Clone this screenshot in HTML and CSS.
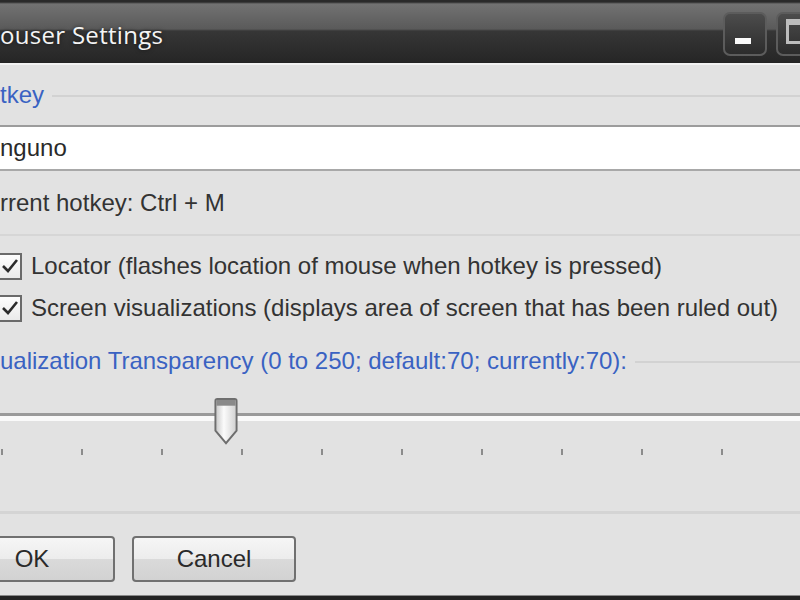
FILE: index.html
```html
<!DOCTYPE html>
<html lang="en">
<head>
    <meta charset="UTF-8">
    <title>Mouser Settings</title>
    <link rel="stylesheet" href="styles.css">
</head>
<body>
    <div class="window">
        <!-- title bar -->
        <header class="titlebar">
            <h1 class="title">ouser Settings</h1>
            <div class="controls">
                <span class="ctl ctl-min"><span class="glyph-min"></span></span>
                <span class="ctl ctl-max"><span class="glyph-max"></span></span>
            </div>
        </header>

        <main class="content">
            <!-- hotkey group -->
            <div class="group-head">
                <span class="group-label">tkey</span>
                <span class="group-line"></span>
            </div>
            <div class="textbox">nguno</div>
            <p class="current">rrent hotkey: Ctrl + M</p>
            <div class="sep sep-top"></div>

            <!-- options -->
            <label class="check">
                <span class="box"><svg viewBox="0 0 20 20" width="20" height="20"><path d="M3 10 L8 15 L17 4" fill="none" stroke="#2b2b2b" stroke-width="2.6"/></svg></span>
                Locator (flashes location of mouse when hotkey is pressed)
            </label>
            <label class="check">
                <span class="box"><svg viewBox="0 0 20 20" width="20" height="20"><path d="M3 10 L8 15 L17 4" fill="none" stroke="#2b2b2b" stroke-width="2.6"/></svg></span>
                Screen visualizations (displays area of screen that has been ruled out)
            </label>

            <!-- transparency -->
            <div class="group-head group-trans">
                <span class="group-label">ualization Transparency (0 to 250; default:70; currently:70):</span>
                <span class="group-line"></span>
            </div>
            <div class="slider">
                <div class="track"></div>
                <svg class="thumb" viewBox="0 0 26 50" width="26" height="50">
                    <defs>
                        <linearGradient id="thumbFill" x1="0" x2="1" y1="0" y2="0">
                            <stop offset="0" stop-color="#c8c8c8"/>
                            <stop offset="0.4" stop-color="#fbfbfb"/>
                            <stop offset="1" stop-color="#d0d0d0"/>
                        </linearGradient>
                    </defs>
                    <path d="M2 3 Q2 1 4 1 L22 1 Q24 1 24 3 L24 34 L13 47 L2 34 Z" fill="url(#thumbFill)" stroke="#6e6e6e" stroke-width="2"/>
                    <rect x="3" y="2" width="20" height="6" fill="#8a8a8a"/>
                </svg>
            </div>
            <div class="ticks">
                <i></i><i></i><i></i><i></i><i></i><i></i><i></i><i></i><i></i><i></i><i></i>
            </div>
            <div class="sep sep-bottom"></div>

            <div class="buttons">
                <button type="button" class="btn btn-ok">OK</button>
                <button type="button" class="btn btn-cancel">Cancel</button>
            </div>
        </main>
        <div class="frame-bottom"></div>
    </div>
</body>
</html>
```

FILE: styles.css
```css
body {
    margin: 0;
    padding: 0;
    background-color: #e2e2e2;
    font-family: 'Liberation Sans', Arial, sans-serif;
}
.window {
    width: 800px;
    height: 600px;
    overflow: hidden;
    display: flex;
    flex-direction: column;
    background-color: #e2e2e2;
}
.titlebar {
    height: 65px;
    flex: none;
    display: flex;
    align-items: center;
    justify-content: space-between;
    background: linear-gradient(#2a2a2a 0, #2a2a2a 2px, #727272 4px, #5a5a5a 29px, #363636 31px, #262626 62px, #1a1a1a 65px);
    border-bottom: 2px solid #f2f2f2;
    box-sizing: border-box;
}
.title {
    margin: 6px 0 0 0;
    font-family: 'Open Sans', sans-serif;
    font-size: 24px;
    font-weight: normal;
    color: #f4f4f4;
    letter-spacing: 0.3px;
    text-shadow: 0 0 4px rgba(0, 0, 0, 0.6);
}
.controls {
    display: flex;
    gap: 9px;
    margin-right: -20px;
    align-self: flex-start;
    margin-top: 12px;
}
.ctl {
    width: 44px;
    height: 44px;
    box-sizing: border-box;
    border: 2px solid #5c5c5c;
    border-radius: 7px;
    background: linear-gradient(#4c4c4c, #2c2c2c);
    display: flex;
    align-items: flex-end;
    justify-content: center;
}
.glyph-min {
    width: 16px;
    height: 6px;
    background: #fafafa;
    margin-bottom: 10px;
    margin-right: 4px;
}
.glyph-max {
    width: 24px;
    height: 16px;
    border: 3px solid #bdbdbd;
    border-top-width: 6px;
    margin-bottom: 10px;
    margin-left: 6px;
}
.content {
    flex: 1;
    display: flex;
    flex-direction: column;
    font-size: 24px;
    color: #333;
}
.group-head {
    display: flex;
    align-items: center;
    gap: 8px;
    margin-top: 15px;
    height: 30px;
}
.group-label {
    color: #3a62c2;
    white-space: nowrap;
}
.group-line {
    flex: 1;
    height: 2px;
    background: #d2d2d2;
    margin-top: 2px;
}
.textbox {
    margin-top: 15px;
    height: 42px;
    line-height: 42px;
    background: #fff;
    border-top: 2px solid #9c9c9c;
    border-bottom: 2px solid #a8a8a8;
    color: #2a2a2a;
}
.current {
    margin: 18px 0 0 0;
    height: 28px;
    line-height: 28px;
}
.sep {
    height: 2px;
    background: #d6d6d6;
}
.sep-top {
    margin-top: 17px;
}
.check {
    display: flex;
    align-items: center;
    gap: 9px;
    height: 32px;
    margin-top: 14px;
}
.check + .check {
    margin-top: 10px;
}
.box {
    width: 27px;
    height: 27px;
    margin-left: -5px;
    box-sizing: border-box;
    border: 2px solid #6a6a6a;
    background: linear-gradient(#fdfdfd, #eaeaea);
    display: flex;
    align-items: center;
    justify-content: flex-end;
}
.group-trans {
    margin-top: 22px;
}
.slider {
    margin-top: 20px;
    height: 50px;
    display: flex;
    flex-direction: column;
}
.track {
    margin-top: 17px;
    height: 3px;
    background: #9a9a9a;
    border-bottom: 5px solid #fafafa;
}
.thumb {
    margin: -23px 0 0 213px;
}
.ticks {
    display: flex;
    gap: 78px;
    margin-top: 3px;
    padding-left: 1px;
}
.ticks i {
    width: 2px;
    height: 6px;
    background: #8c8c8c;
    flex: none;
}
.sep-bottom {
    margin-top: 56px;
    height: 3px;
    background: #d4d4d4;
}
.buttons {
    display: flex;
    gap: 17px;
    margin-top: 22px;
}
.btn {
    height: 46px;
    font-family: 'Liberation Sans', Arial, sans-serif;
    font-size: 24px;
    color: #2a2a2a;
    border: 2px solid #707070;
    border-radius: 4px;
    background: linear-gradient(#f6f6f6 0, #ececec 50%, #dadada 51%, #d2d2d2 100%);
    padding: 0;
}
.btn-ok {
    width: 166px;
    margin-left: -51px;
}
.btn-cancel {
    width: 164px;
}
.frame-bottom {
    height: 4px;
    flex: none;
    background: #222;
    border-top: 1px solid #888;
}
```
